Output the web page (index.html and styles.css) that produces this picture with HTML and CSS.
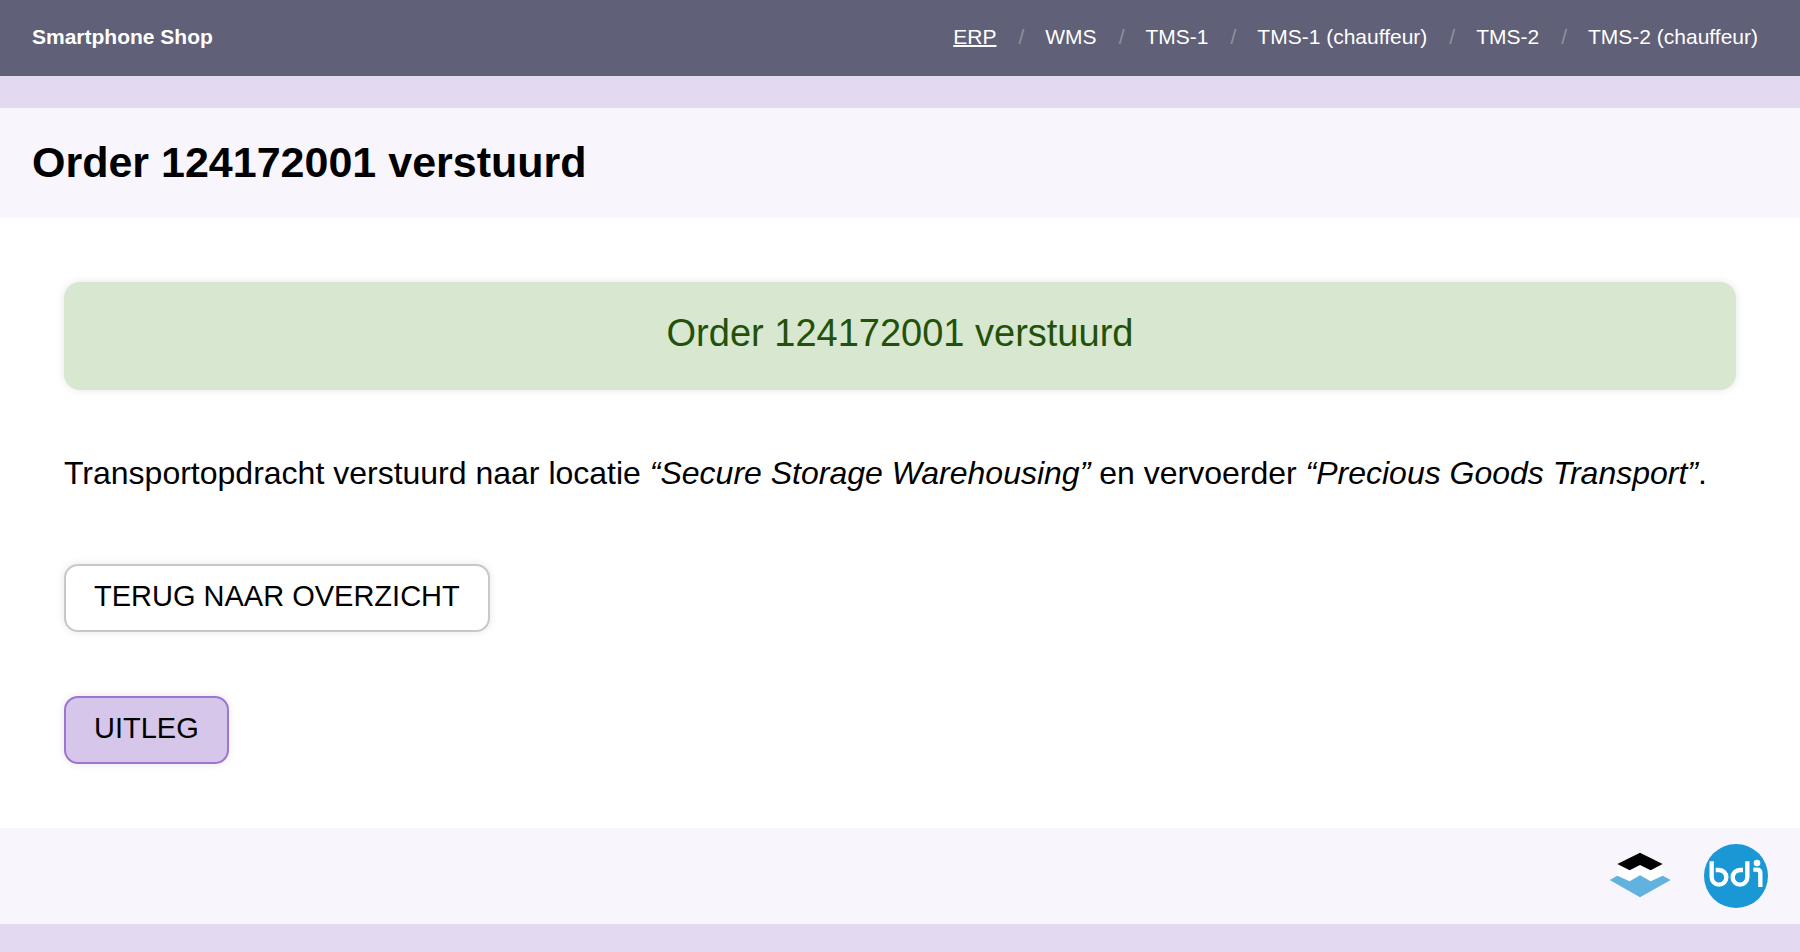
FILE: index.html
```html
<!DOCTYPE html>
<html lang="nl">
<head>
<meta charset="utf-8">
<meta name="viewport" content="width=device-width, initial-scale=1">
<title>Order 124172001 verstuurd</title>
<link rel="stylesheet" href="styles.css">
</head>
<body>
<header class="topbar">
  <strong class="brand">Smartphone Shop</strong>
  <nav aria-label="Systemen">
    <ul class="menu">
      <li><a class="active" href="#erp" aria-current="page">ERP</a></li>
      <li><a href="#wms">WMS</a></li>
      <li><a href="#tms-1">TMS-1</a></li>
      <li><a href="#tms-1-chauffeur">TMS-1 (chauffeur)</a></li>
      <li><a href="#tms-2">TMS-2</a></li>
      <li><a href="#tms-2-chauffeur">TMS-2 (chauffeur)</a></li>
    </ul>
  </nav>
</header>
<div class="title-band">
  <h1>Order 124172001 verstuurd</h1>
</div>
<main class="content">
  <div class="notice" role="status">Order 124172001 verstuurd</div>
  <p class="message">Transportopdracht verstuurd naar locatie <em>“Secure Storage Warehousing”</em> en vervoerder <em>“Precious Goods Transport”</em>.</p>
  <a class="button" href="#overzicht">TERUG NAAR OVERZICHT</a>
  <button class="button explain" type="button">UITLEG</button>
</main>
<footer class="footer">
  <svg class="logo" viewBox="53 72 192 192" aria-hidden="true">
    <path fill="#fff" d="M81 132 149 120 217 132V172L149 200 81 172Z"/>
    <path fill="#000" d="M149 98 217 132 181 151 149 135 118 151 81 132Z"/>
    <path fill="#62b2df" d="M81 167 118 184 149 166 181 184 217 167 241 180 149 232 58 180Z"/>
  </svg>
  <svg class="logo" viewBox="342 72 192 192" role="img" aria-label="bdi">
    <circle cx="438" cy="168" r="96" fill="#1998d5"/>
    <g fill="none" stroke="#fff" stroke-width="13">
      <path d="M365 124V172A22 22 0 1 0 387 150H377"/>
      <path d="M472 124V172A22 22 0 1 1 450 150H459"/>
      <path d="M490 149H501Q511 149 511 160V201"/>
    </g>
    <circle cx="501" cy="129" r="10" fill="#fff"/>
  </svg>
</footer>
</body>
</html>
```
FILE: styles.css
```css
* { box-sizing: border-box; }

body {
  margin: 0;
  background: #e3d9f1;
  color: #000;
  font-family: "Liberation Sans", Arial, sans-serif;
  font-size: 32px;
  line-height: 38px;
}

.topbar {
  display: flex;
  justify-content: space-between;
  align-items: center;
  margin-bottom: 32px;
  padding: 24px 42px 26px 32px;
  background: #606078;
  color: #fff;
  font-size: 21px;
  line-height: 26px;
}

.menu {
  display: flex;
  flex-wrap: wrap;
  margin: 0;
  padding: 0;
  list-style: none;
}

.menu li + li::before {
  content: "/";
  margin: 0 21px 0 22px;
  color: #9090a1;
}

.menu a {
  color: inherit;
  text-decoration: none;
}

.menu .active {
  text-decoration: underline;
  text-decoration-thickness: 2px;
}

.title-band {
  padding: 30px 32px 32px;
  background: #f8f5fc;
}

h1 {
  margin: 0;
  font-size: 43px;
  line-height: 48px;
}

.content {
  display: flex;
  flex-direction: column;
  align-items: flex-start;
  gap: 64px;
  padding: 64px;
  background: #fff;
}

.notice {
  align-self: stretch;
  padding: 32px 32px 38px;
  border-radius: 16px;
  background: #d8e7d0;
  box-shadow: 0 0 8px rgba(0, 0, 0, 0.1);
  color: #225209;
  font-size: 38px;
  text-align: center;
}

.message {
  margin: 0;
  padding-bottom: 8px;
}

.button {
  padding: 13px 28px 17px;
  border: 2px solid #c8c8c8;
  border-radius: 14px;
  background: #fff;
  box-shadow: 0 0 8px rgba(0, 0, 0, 0.1);
  color: #000;
  font-family: inherit;
  font-size: 29px;
  line-height: 34px;
  text-decoration: none;
}

.explain {
  border-color: #9c75d1;
  background: #d6c6ea;
}

.footer {
  display: flex;
  justify-content: flex-end;
  gap: 32px;
  padding: 16px 32px;
  background: #f8f5fc;
}

.logo {
  width: 64px;
  height: 64px;
}
```
